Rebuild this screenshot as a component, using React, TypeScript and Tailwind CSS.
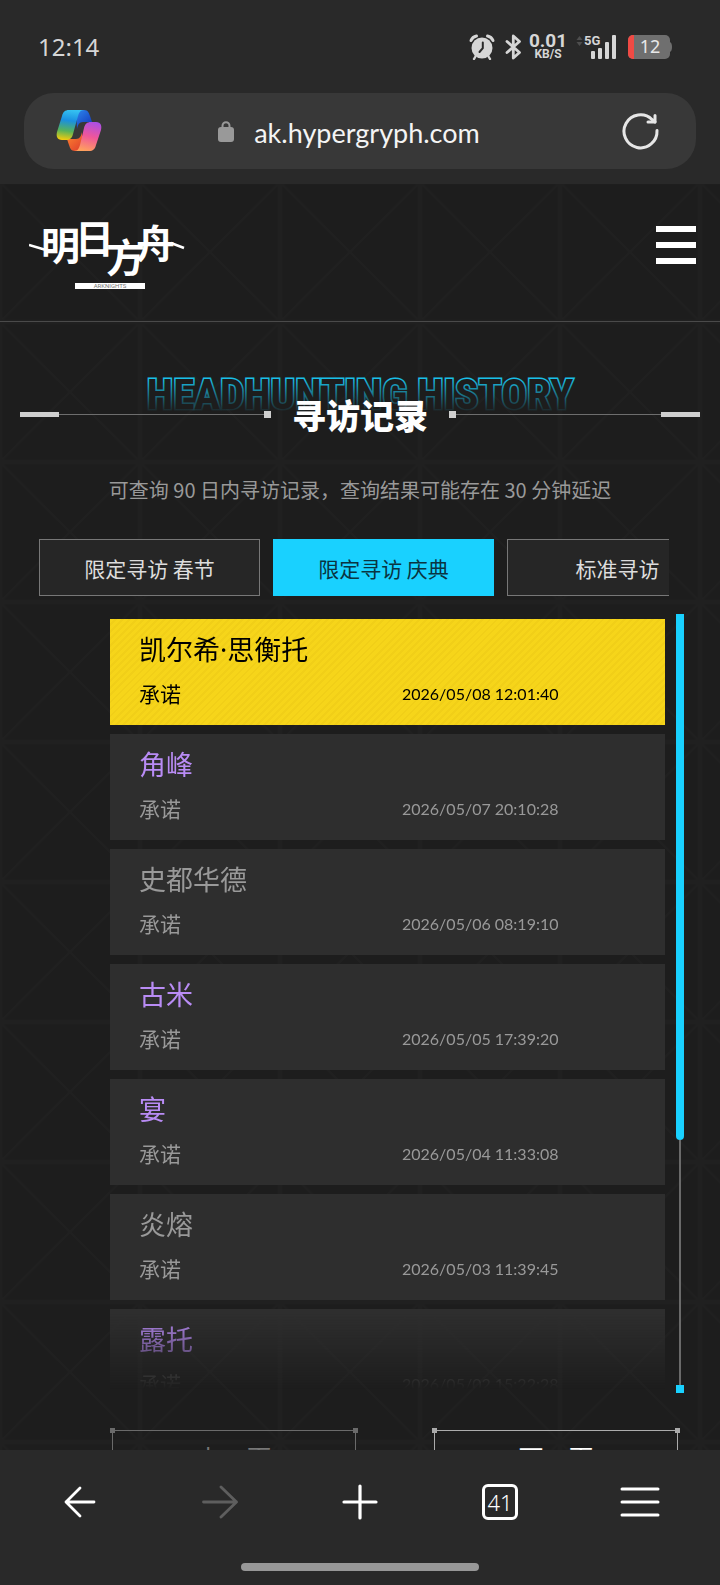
import React, { useState } from 'react';
import { clsx } from 'clsx';

type Rarity = 'six' | 'four' | 'three';

const records: { name: string; rarity: Rarity; time: string }[] = [
  { name: '凯尔希·思衡托', rarity: 'six', time: '2026/05/08 12:01:40' },
  { name: '角峰', rarity: 'four', time: '2026/05/07 20:10:28' },
  { name: '史都华德', rarity: 'three', time: '2026/05/06 08:19:10' },
  { name: '古米', rarity: 'four', time: '2026/05/05 17:39:20' },
  { name: '宴', rarity: 'four', time: '2026/05/04 11:33:08' },
  { name: '炎熔', rarity: 'three', time: '2026/05/03 11:39:45' },
  { name: '露托', rarity: 'four', time: '2026/05/02 15:22:28' },
];

const pools = ['限定寻访 春节', '限定寻访 庆典', '标准寻访'];

const nameColor: Record<Rarity, string> = {
  six: 'text-black',
  four: 'text-[#b98cf5]',
  three: 'text-[#999999]',
};

function StatusBar() {
  return (
    <div className="flex h-[93px] items-center justify-between pl-[38px] pr-12 text-[#d6d6d6]">
      <span className="font-['Noto_Sans','Noto_Sans_CJK_SC',sans-serif] text-[24px] leading-8">12:14</span>
      <div className="flex items-center">
        <svg width="26" height="26" viewBox="0 0 26 26" fill="none" aria-label="闹钟">
          <circle cx="13" cy="14" r="10.5" fill="#d6d6d6" />
          <path d="M2 6.500C3 4 5 2.500 7.500 2M24 6.500C23 4 21 2.500 18.500 2" stroke="#d6d6d6" strokeWidth="3" strokeLinecap="round" />
          <path d="M6.500 22.500 5 25M19.500 22.500 21 25" stroke="#d6d6d6" strokeWidth="2.400" strokeLinecap="round" />
          <path d="M13.800 8.500v5.700L10.500 18" stroke="#292929" strokeWidth="2" strokeLinecap="round" />
        </svg>
        <svg className="ml-[10px]" width="17" height="26" viewBox="0 0 17 26" fill="none" aria-label="蓝牙">
          <path d="m2 7.500 12.500 11L8.300 24V2l6.200 5.500L2 18.500" stroke="#d6d6d6" strokeWidth="2.800" strokeLinejoin="round" strokeLinecap="round" />
        </svg>
        <div className="ml-2 flex w-9 flex-col items-center font-['Roboto',sans-serif] font-bold">
          <span className="text-[19px] leading-[15px]">0.01</span>
          <span className="text-[12px] leading-3">KB/S</span>
        </div>
        <svg className="ml-[10px]" width="42" height="26" viewBox="0 0 42 26" aria-label="5G 信号">
          <path d="m3.500 2 3 4h-6zM3.500 12l3-4h-6z" fill="#4e4e4e" />
          <text x="8" y="11" fontSize="13" fontWeight="700" fontFamily="Roboto, sans-serif" fill="#d6d6d6">5G</text>
          <rect x="15" y="17" width="4" height="8" rx="1" fill="#d6d6d6" />
          <rect x="22" y="14" width="4" height="11" rx="1" fill="#d6d6d6" />
          <rect x="29" y="8" width="4" height="17" rx="1" fill="#d6d6d6" />
          <rect x="36" y="1" width="4" height="24" rx="1" fill="#d6d6d6" />
        </svg>
        <svg className="ml-[10px]" width="44" height="24" viewBox="0 0 44 24" aria-label="电量 12%">
          <clipPath id="cell">
            <rect width="42" height="24" rx="5" />
          </clipPath>
          <g clipPath="url(#cell)">
            <rect width="42" height="24" fill="#6f6f6f" />
            <rect width="6" height="24" fill="#f04a44" />
          </g>
          <path d="M42 7q2 1 2 5t-2 5z" fill="#6f6f6f" />
          <text x="22" y="18" textAnchor="middle" fontSize="18" fontFamily="Noto Sans, sans-serif" fill="#e8e8e8">12</text>
        </svg>
      </div>
    </div>
  );
}

function CopilotIcon() {
  return (
    <svg width="46" height="42" viewBox="0 0 46 42" fill="none">
      <defs>
        <linearGradient id="cpLeft" x1="14" y1="0" x2="10" y2="30" gradientUnits="userSpaceOnUse">
          <stop stopColor="#35c1f1" />
          <stop offset=".35" stopColor="#1a8fe0" />
          <stop offset=".7" stopColor="#57b35a" />
          <stop offset="1" stopColor="#f2cb0d" />
        </linearGradient>
        <linearGradient id="cpTop" x1="24" y1="0" x2="34" y2="12" gradientUnits="userSpaceOnUse">
          <stop stopColor="#2a7de6" />
          <stop offset="1" stopColor="#1746c4" />
        </linearGradient>
        <linearGradient id="cpRight" x1="36" y1="11" x2="28" y2="41" gradientUnits="userSpaceOnUse">
          <stop stopColor="#a84fe8" />
          <stop offset=".5" stopColor="#f0569a" />
          <stop offset="1" stopColor="#ffa25c" />
        </linearGradient>
        <linearGradient id="cpBottom" x1="12" y1="30" x2="22" y2="41" gradientUnits="userSpaceOnUse">
          <stop stopColor="#f5742f" />
          <stop offset="1" stopColor="#e2452c" />
        </linearGradient>
      </defs>
      <path d="M20 0h8c4 0 5 3 6 6l2 6h-9c-4 0-5 3-6 7z" fill="url(#cpTop)" />
      <path d="M26 41h-7c-4 0-5-3-6-6l-2-6h9c4 0 5-3 6-7z" fill="url(#cpBottom)" />
      <path d="M13 0h15c-4 0-5 3-6 6l-5 18c-1 4-3 6-7 6H6c-5 0-6-4-5-8L6 6c1-4 3-6 7-6Z" fill="url(#cpLeft)" />
      <path d="M33 41H18c4 0 5-3 6-6l4-17c1-4 3-6 7-6h5c5 0 6 4 5 8l-5 15c-1 4-3 6-7 6Z" fill="url(#cpRight)" />
    </svg>
  );
}

function AddressBar() {
  return (
    <div className="mx-6 mb-[15px] flex h-[76px] items-center rounded-[30px] bg-[#383838] pl-8 pr-9">
      <button aria-label="Copilot">
        <CopilotIcon />
      </button>
      <div className="flex flex-1 items-center justify-center gap-5 pr-6">
        <svg width="16" height="21" viewBox="0 0 16 21" fill="none" aria-hidden="true">
          <path d="M4.500 8V4.800a3.500 3.500 0 0 1 7 0V8" stroke="#999" strokeWidth="2" />
          <rect y="6" width="16" height="15" rx="3" fill="#999" />
        </svg>
        <a href="#top" className="pt-1 font-['Lato',sans-serif] text-[27px] leading-9 text-[#f4f4f4]">ak.hypergryph.com</a>
      </div>
      <button aria-label="刷新">
        <svg width="40" height="40" viewBox="0 0 40 40" fill="none" stroke="#e6e6e6" strokeWidth="3" strokeLinecap="round" strokeLinejoin="round">
          <path d="M37 19.500a16.500 16.500 0 1 1-5-11l3 2.500" />
          <path d="M35 4.500V11h-7" />
        </svg>
      </button>
    </div>
  );
}

function Lattice() {
  return (
    <svg className="absolute inset-0 h-full w-full" aria-hidden="true">
      <defs>
        <pattern id="lattice" width="140" height="140" y="-2" patternUnits="userSpaceOnUse">
          <path d="M0 0 140 140M140 0 0 140" stroke="#202020" strokeWidth="2" />
          <path d="M0 0H140V140H0Z" stroke="#202020" strokeWidth="5" fill="none" />
        </pattern>
      </defs>
      <rect width="100%" height="100%" fill="url(#lattice)" />
    </svg>
  );
}

function Logo() {
  return (
    <svg width="158" height="80" viewBox="0 0 158 80" role="img" aria-label="明日方舟">
      <g fill="#fff" fontFamily="Noto Sans CJK SC, sans-serif" fontWeight="700" fontSize="39">
        <text x="12" y="48">明</text>
        <text x="46" y="41">日</text>
        <text x="77" y="60">方</text>
        <text x="107" y="46">舟</text>
      </g>
      <path d="m0 33 17 5M142 31l13 5" stroke="#fff" strokeWidth="2.500" />
      <rect x="46" y="71" width="70" height="6" fill="#fff" />
      <text x="81" y="76" textAnchor="middle" fontSize="6" fontFamily="Roboto, sans-serif" fill="#777">ARKNIGHTS</text>
    </svg>
  );
}

function SiteHeader() {
  return (
    <header className="relative flex h-[138px] items-start justify-between border-b border-[#4a4a4a] bg-[#1d1d1d] pl-[29px] pr-6">
      <Lattice />
      <div className="relative pt-[28px]">
        <Logo />
      </div>
      <button aria-label="菜单" className="relative mt-[42px] flex flex-col gap-[10px]">
        <span className="h-[6px] w-10 bg-white" />
        <span className="h-[6px] w-10 bg-white" />
        <span className="h-[6px] w-10 bg-white" />
      </button>
    </header>
  );
}

function Rule({ flip }: { flip?: boolean }) {
  return (
    <div className={clsx('flex flex-1 items-center', flip && 'flex-row-reverse')}>
      <span className="h-[5px] w-[39px] bg-[#cfcfcf]" />
      <span className="h-px flex-1 bg-[#6e6e6e]" />
      <span className="h-[7px] w-[7px] bg-[#cfcfcf]" />
    </div>
  );
}

function Title() {
  return (
    <div className="relative mx-5 pt-[68px]">
      <svg className="absolute inset-x-0 top-[46px] h-[48px] w-full" aria-hidden="true">
        <defs>
          <linearGradient id="fade" x1="0" y1="0" x2="0" y2="48" gradientUnits="userSpaceOnUse">
            <stop offset=".2" stopColor="#19c4ee" />
            <stop offset=".9" stopColor="#19c4ee" stopOpacity=".05" />
          </linearGradient>
        </defs>
        <text
          x="50%"
          y="41"
          textAnchor="middle"
          fontFamily="Liberation Sans Narrow, Roboto Condensed, Open Sans Condensed, Roboto, sans-serif"
          fontWeight="700"
          fontSize="43"
          fill="#1d1d1d"
          stroke="url(#fade)"
          strokeWidth="3"
          paintOrder="stroke"
        >
          HEADHUNTING HISTORY
        </text>
      </svg>
      <div className="relative flex h-[49px] items-center">
        <Rule />
        <h1 className="px-[21px] text-[34px] font-black leading-[48px] text-white">寻访记录</h1>
        <Rule flip />
      </div>
    </div>
  );
}

function PoolTabs() {
  const [active, setActive] = useState(1);

  return (
    <div className="ml-[39px] mr-[51px] mt-[35px] flex gap-[13px] overflow-hidden">
      {pools.map((pool, i) => (
        <button
          key={pool}
          onClick={() => setActive(i)}
          className={clsx(
            'h-[57px] w-[221px] shrink-0 border text-[21px] leading-8',
            i === active ? 'border-[#19d1ff] bg-[#19d1ff] text-[#0a3441]' : 'border-[#777777] bg-[#262626] text-[#dddddd]'
          )}
        >
          {pool}
        </button>
      ))}
    </div>
  );
}

function RecordList() {
  return (
    <div className="ml-[110px] mr-9 mt-[18px] flex h-[779px] gap-[11px]">
      <ul className="flex flex-1 flex-col gap-[9px] overflow-hidden pt-[5px] [mask-image:linear-gradient(to_bottom,#000_calc(100%-80px),transparent_calc(100%-4px))]">
        {records.map((r) => (
          <li
            key={r.time}
            className={clsx(
              'h-[106px] shrink-0 pl-[29px] pt-3',
              r.rarity === 'six'
                ? 'bg-[#f6d51a] bg-[repeating-linear-gradient(135deg,#f6d51a_0px,#f6d51a_3px,#f1cf18_3px,#f1cf18_5px)]'
                : 'bg-[#2e2e2e]'
            )}
          >
            <p className={clsx("font-['Noto_Sans','Noto_Sans_CJK_SC',sans-serif] text-[27px] leading-[38px]", nameColor[r.rarity])}>
              {r.name}
            </p>
            <div className={clsx('mt-2 grid grid-cols-2 leading-8', r.rarity === 'six' ? 'text-black' : 'text-[#999999]')}>
              <span className="text-[21px]">承诺</span>
              <time className="pt-px font-['Lato',sans-serif] text-[16px] leading-8">{r.time}</time>
            </div>
          </li>
        ))}
      </ul>
      {/* scroll indicator */}
      <div className="flex w-2 flex-col items-center">
        <span className="h-[526px] w-2 rounded-b bg-[#19d1ff]" />
        <span className="w-[2px] flex-1 bg-[#6a6a6a]" />
        <span className="h-2 w-2 bg-[#19d1ff]" />
      </div>
    </div>
  );
}

function PageButton({ label, disabled }: { label: string; disabled?: boolean }) {
  return (
    <button
      disabled={disabled}
      className={clsx(
        'relative h-[54px] w-[244px] border text-[25px] leading-[50px]',
        disabled ? 'border-[#6a6a6a] text-[#777777]' : 'border-[#aaaaaa] text-white'
      )}
    >
      {label}
      <span className={clsx('absolute -left-[3px] -top-[3px] h-[5px] w-[5px]', disabled ? 'bg-[#6a6a6a]' : 'bg-[#aaaaaa]')} />
      <span className={clsx('absolute -right-[3px] -top-[3px] h-[5px] w-[5px]', disabled ? 'bg-[#6a6a6a]' : 'bg-[#aaaaaa]')} />
    </button>
  );
}

function BrowserNav() {
  return (
    <footer className="shrink-0 bg-[#292929] px-[10px] pb-[14px]">
      <nav className="grid h-[104px] grid-cols-5 place-items-center">
        <button aria-label="后退">
          <svg width="34" height="34" viewBox="0 0 34 34" fill="none" stroke="#fff" strokeWidth="2.800" strokeLinecap="round" strokeLinejoin="round">
            <path d="M31 17H3M17 3 3 17l14 14" />
          </svg>
        </button>
        <button aria-label="前进" disabled>
          <svg width="36" height="34" viewBox="0 0 36 34" fill="none" stroke="#5e5e5e" strokeWidth="2.800" strokeLinecap="round" strokeLinejoin="round">
            <path d="M1.500 17h33M19 2l15.500 15L19 32" />
          </svg>
        </button>
        <button aria-label="新建标签页">
          <svg width="36" height="36" viewBox="0 0 36 36" fill="none" stroke="#fff" strokeWidth="3.200" strokeLinecap="round">
            <path d="M18 2v32M2 18h32" />
          </svg>
        </button>
        <button className="flex h-9 w-9 items-center justify-center rounded-md border-[3px] border-white font-['Noto_Sans',sans-serif] text-[22px] font-light leading-6 text-white">
          41
        </button>
        <button aria-label="更多">
          <svg width="40" height="32" viewBox="0 0 40 32" fill="none" stroke="#fff" strokeWidth="3" strokeLinecap="round">
            <path d="M2 3h36M2 16h36M2 29h36" />
          </svg>
        </button>
      </nav>
      <div className="mx-auto mt-[9px] h-2 w-[34%] rounded-full bg-[#979797]" />
    </footer>
  );
}

export default function App() {
  return (
    <div className="flex h-screen flex-col bg-[#292929] font-['Noto_Sans_CJK_SC',sans-serif]">
      <StatusBar />
      <AddressBar />
      <main id="top" className="relative min-h-0 flex-1 overflow-hidden bg-[#1d1d1d]">
        <Lattice />
        <SiteHeader />
        <div className="relative">
          <Title />
          <p className="mt-[37px] text-center text-[20px] leading-7 text-[#999999]">
            可查询 90 日内寻访记录，查询结果可能存在 30 分钟延迟
          </p>
          <PoolTabs />
          <RecordList />
          <div className="ml-28 mr-[42px] mt-[37px] flex justify-between">
            <PageButton label="上一页" disabled />
            <PageButton label="下一页" />
          </div>
        </div>
      </main>
      <BrowserNav />
    </div>
  );
}
